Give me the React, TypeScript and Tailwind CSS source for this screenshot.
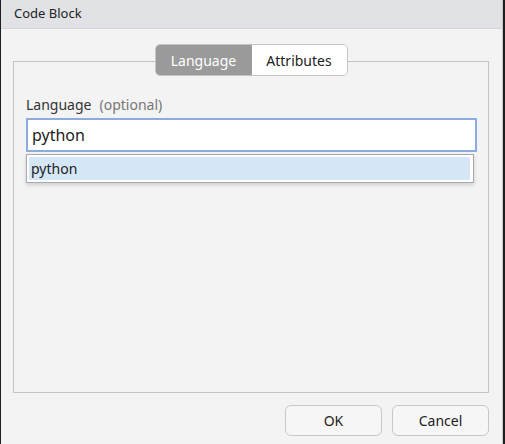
export default function App() {
  return (
    <div
      className="w-[505px] h-[444px] flex bg-[#1e1e1e]"
      style={{ fontFamily: '"Noto Sans", "Open Sans", Arial, sans-serif' }}
    >
      <div className="ml-px w-[502px] h-full flex flex-col bg-[#f2f3f2] border-r border-[#c9c9c9]">
        {/* title bar */}
        <div className="h-[29px] shrink-0 flex items-center pl-[13px] bg-[#e1e2e6] border-b border-[#d4d5d8] text-[13px] text-[#222]">
          Code Block
        </div>

        {/* tabs + group box */}
        <div className="flex flex-col pt-[15px] pl-[12px] pr-[13px]">
          <div className="relative z-10 flex justify-center">
            <div className="flex h-[32px] rounded-[5px] border border-[#c6c6c6] overflow-hidden text-[14px]">
              <div className="w-[96px] flex items-center justify-center bg-[#9a9a9a] text-white">
                Language
              </div>
              <div className="w-[95px] flex items-center justify-center bg-white text-[#222]">
                Attributes
              </div>
            </div>
          </div>
          <div className="-mt-[15px] h-[332px] border border-[#c3c3c3] pt-[31px] pl-[12px] pr-[11px]">
            <div className="h-[22px] flex items-center text-[14px] text-[#333]">
              Language
              <span className="ml-[8px] text-[#777]">(optional)</span>
            </div>
            <div className="mt-[3px] h-[34px] border-2 border-[#8cabdf] bg-white flex items-center pl-[4px] text-[16px] text-[#222]">
              python
            </div>
            <div className="mt-[2px] w-[448px] h-[29px] border border-[#a9a9b1] bg-white py-[2px] pl-[2px] pr-[3px] shadow-[0_2px_4px_rgba(0,0,0,0.15)]">
              <div className="h-full bg-[#d5e7f6] flex items-center pl-[2px] text-[14px] text-[#222]">
                python
              </div>
            </div>
          </div>
        </div>

        {/* buttons */}
        <div className="flex justify-end gap-[10px] pt-[12px] pr-[13px]">
          <button className="w-[97px] h-[31px] rounded-[6px] border border-[#c7c7c7] bg-[#f6f6f6] text-[14px] text-[#222]">
            OK
          </button>
          <button className="w-[97px] h-[31px] rounded-[6px] border border-[#c7c7c7] bg-[#f6f6f6] text-[14px] text-[#222]">
            Cancel
          </button>
        </div>
      </div>
    </div>
  );
}
